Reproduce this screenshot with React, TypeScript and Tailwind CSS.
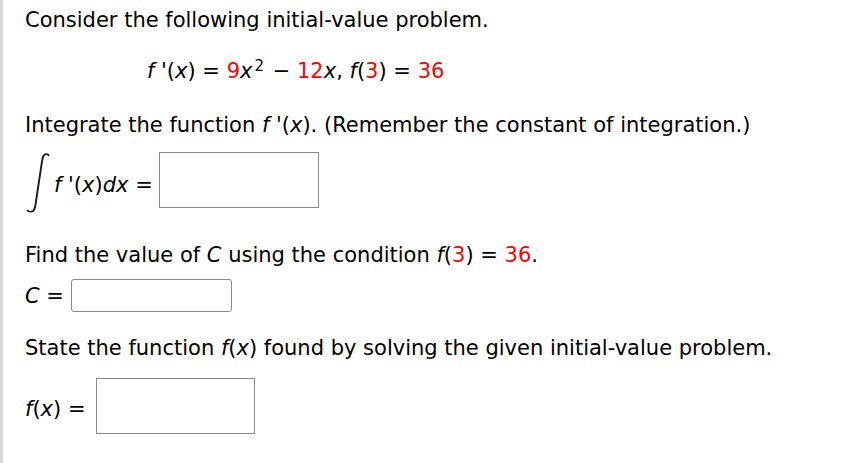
import React from 'react';

// Red highlighted values in the problem statement
const Red: React.FC<{ children: React.ReactNode }> = ({ children }) => (
    <span className="text-[#ff0000]">{children}</span>
);

const I: React.FC<{ children: React.ReactNode }> = ({ children }) => <i className="italic">{children}</i>;

const IntegralSign = () => (
    <svg width="26" height="60" viewBox="0 0 26 60" className="shrink-0 mt-[1px] -ml-[1px]">
        <path
            d="M24.5 2.2 C23 0.6 20.6 0.6 19.4 3 C18.6 4.6 18.2 7 17.8 9.6 L11.6 51 C11.1 54.6 10.3 57 9 58 C7.6 59 5 58.8 3.6 57.6"
            fill="none"
            stroke="#1a1a1a"
            strokeWidth="1.9"
            strokeLinecap="round"
        />
    </svg>
);

const AnswerBox: React.FC<{ className: string }> = ({ className }) => (
    <div className={`bg-white border border-[#8a8a8a] shrink-0 ${className}`} />
);

export default function App() {
    return (
        <div className="min-h-[463px] w-full bg-white border-l-[3px] border-[#d6d6d6] overflow-hidden">
            <div
                className="pl-[22px] text-black text-[21px] leading-[24px] flex flex-col"
                style={{ fontFamily: '"DejaVu Sans", Verdana, sans-serif' }}
            >
                <div className="mt-[8px] h-[24px] whitespace-nowrap">Consider the following initial-value problem.</div>

                <div className="mt-[27px] h-[24px] pl-[122px] whitespace-nowrap">
                    <I>f</I> '(<I>x</I>) = <Red>9</Red><I>x</I>
                    <sup className="text-[15px] ml-[2px] mr-[2px]">2</sup> − <Red>12</Red><I>x</I>, <I>f</I>(<Red>3</Red>) ={' '}
                    <Red>36</Red>
                </div>

                <div className="mt-[30px] h-[24px] whitespace-nowrap">
                    Integrate the function <I>f</I> '(<I>x</I>). (Remember the constant of integration.)
                </div>

                <div className="mt-[15px] h-[60px] flex items-start">
                    <IntegralSign />
                    <span className="ml-[4px] mt-[21px] whitespace-nowrap">
                        <I>f</I> '(<I>x</I>)<I>dx</I> =
                    </span>
                    <AnswerBox className="ml-[6px] w-[160px] h-[56px]" />
                </div>

                <div className="mt-[31px] h-[24px] whitespace-nowrap">
                    Find the value of <I>C</I> using the condition <I>f</I>(<Red>3</Red>) = <Red>36</Red>.
                </div>

                <div className="mt-[12px] h-[33px] flex items-center">
                    <span className="whitespace-nowrap">
                        <I>C</I> =
                    </span>
                    <AnswerBox className="ml-[7px] w-[161px] h-[33px] rounded-[3px] border-[#7a7a7a]" />
                </div>

                <div className="mt-[24px] h-[24px] whitespace-nowrap">
                    State the function <I>f</I>(<I>x</I>) found by solving the given initial-value problem.
                </div>

                <div className="mt-[18px] h-[56px] flex items-start">
                    <span className="mt-[19px] whitespace-nowrap">
                        <I>f</I>(<I>x</I>) =
                    </span>
                    <AnswerBox className="ml-[10px] w-[159px] h-[56px]" />
                </div>
            </div>
        </div>
    );
}
